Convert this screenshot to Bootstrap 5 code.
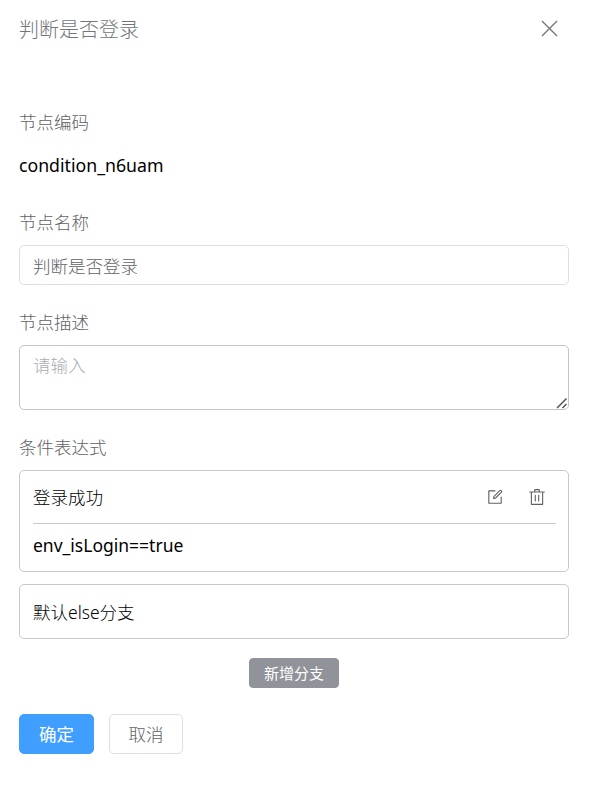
<!DOCTYPE html>
<html lang="zh-CN">
<head>
<meta charset="utf-8">
<meta name="viewport" content="width=device-width, initial-scale=1">
<title>判断是否登录</title>
<link href="https://cdn.jsdelivr.net/npm/bootstrap@5.3.0/dist/css/bootstrap.min.css" rel="stylesheet">
<style>
body{font-family:"Noto Sans","Noto Sans CJK SC",sans-serif;font-size:17.5px;line-height:30px;color:#000;background:#fff;font-weight:300}
.drawer{padding:0 20px 0 19px}
.drawer-head{height:60px;color:#72767b}
.drawer-title{font-size:20px;font-weight:300;line-height:30px}
.x-btn{margin-right:11px;margin-top:-3px;color:#72767b;line-height:0}
.field-label{color:#606266;height:30px;font-weight:300}
.code-value{height:30px;font-size:17.7px;font-weight:400}
.form-control.field-box{font-size:17.5px;font-weight:300;color:#606266;border:1px solid #dcdfe6;border-radius:5px;padding:0 13px;height:40px;line-height:38px}
.form-control.area-box{height:65px;padding:4px 13px;line-height:30px;border-color:#c0c4cc;resize:none}
.area-box::placeholder{color:#a8abb2;opacity:1}
.grip{right:1px;bottom:1px}
.branch{border:1px solid #c8c9cc;border-radius:5px;padding:0 12px 0 13px}
.branch-top{height:53px;border-bottom:1px solid #c8c9cc}
.branch-icons{gap:24px;color:#606266;padding-right:10px}
.expr{height:47px;padding-top:6px;font-weight:400;font-size:17.5px}
.btn-add{--bs-btn-bg:#909399;--bs-btn-color:#fff;--bs-btn-border-color:#909399;width:90px;height:30px;font-size:15px;line-height:28px;border-radius:4px}
.btn-act{height:40px;font-size:17.5px;line-height:36px;border-radius:5px;font-weight:300}
.btn-ok{--bs-btn-bg:#409eff;--bs-btn-color:#fff;--bs-btn-border-color:#409eff;width:75px;font-weight:400}
.btn-no{--bs-btn-bg:#fff;--bs-btn-color:#606266;--bs-btn-border-color:#dcdfe6;width:74px}
svg{display:block}
</style>
<script src="https://cdn.jsdelivr.net/npm/bootstrap@5.3.0/dist/js/bootstrap.bundle.min.js"></script>
</head>
<body>
<main class="drawer">
  <header class="drawer-head d-flex align-items-center justify-content-between">
    <h1 class="drawer-title mb-0">判断是否登录</h1>
    <button type="button" class="x-btn btn p-0 border-0" aria-label="关闭"><svg width="17" height="17" viewBox="0 0 17 17" fill="none" stroke="#72767b" stroke-width="1.4"><path d="M1 1l15 15M16 1L1 16"/></svg></button>
  </header>
  <form>
    <div style="" class="field-label mt-5">节点编码</div>
    <div class="code-value">condition_n6uam</div>
    <label class="field-label d-block" for="nm">节点名称</label>
    <input id="nm" class="form-control field-box" value="判断是否登录">
    <label class="field-label d-block" for="ds">节点描述</label>
    <div class="position-relative">
      <textarea id="ds" class="form-control field-box area-box" placeholder="请输入"></textarea>
      <svg class="grip position-absolute" width="12" height="12" viewBox="0 0 12 12" stroke="#555" stroke-width="1.5"><path d="M1 11L10.500 1.500M6.500 11L10.500 7"/></svg>
    </div>
    <div class="field-label">条件表达式</div>
    <section class="branch">
      <div class="branch-top d-flex align-items-center justify-content-between">
        <span>登录成功</span>
        <div class="branch-icons d-flex">
          <svg width="18" height="18" viewBox="0 0 1024 1024" fill="currentColor"><path d="M832 512a32 32 0 1 1 64 0v352a32 32 0 0 1-32 32H160a32 32 0 0 1-32-32V160a32 32 0 0 1 32-32h352a32 32 0 0 1 0 64H192v640h640V512z"/><path d="m469.952 554.240 52.800-7.552L847.104 222.400a32 32 0 1 0-45.248-45.248L477.440 501.440l-7.552 52.800zm422.400-422.400a96 96 0 0 1 0 135.808l-331.840 331.840a32 32 0 0 1-18.112 9.088L436.800 623.680a32 32 0 0 1-36.224-36.224l15.104-105.600a32 32 0 0 1 9.024-18.112l331.904-331.840a96 96 0 0 1 135.744 0z"/></svg>
          <svg width="18" height="18" viewBox="0 0 1024 1024" fill="currentColor"><path d="M160 256H96a32 32 0 0 1 0-64h256V95.936a32 32 0 0 1 32-32h256a32 32 0 0 1 32 32V192h256a32 32 0 1 1 0 64h-64v672a32 32 0 0 1-32 32H192a32 32 0 0 1-32-32V256zm448-64v-64H416v64h192zM224 896h576V256H224v640zm192-128a32 32 0 0 1-32-32V416a32 32 0 0 1 64 0v320a32 32 0 0 1-32 32zm192 0a32 32 0 0 1-32-32V416a32 32 0 0 1 64 0v320a32 32 0 0 1-32 32z"/></svg>
        </div>
      </div>
      <div class="expr">env_isLogin==true</div>
    </section>
    <section class="branch other d-flex align-items-center">默认else分支</section>
    <div class="add-row d-flex justify-content-center"><button type="button" class="btn btn-add p-0">新增分支</button></div>
    <div class="act-row d-flex"><button type="button" class="btn btn-act btn-ok p-0">确定</button><button type="button" class="btn btn-act btn-no p-0">取消</button></div>
  </form>
</main>
<style>
form>.field-label:first-child{margin-top:47px!important}
.code-value{margin:13px 0 27px}
.field-label+.field-box,.field-label+.position-relative{margin-top:8px}
.field-box+.field-label,.position-relative+.field-label{margin-top:22px}
.field-label+.branch{margin-top:8px}
.branch{height:102px}
.branch.other{height:55px;margin-top:12px}
.add-row{margin-top:19px;padding-right:0}
.act-row{margin-top:26px;gap:15px}
</style>
</body>
</html>
